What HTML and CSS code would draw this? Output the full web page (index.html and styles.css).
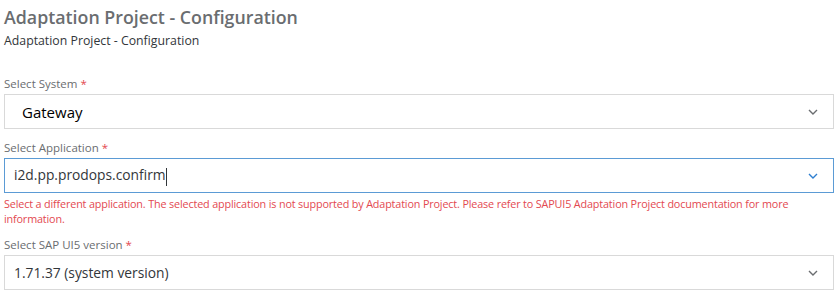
FILE: index.html
```html
<!DOCTYPE html>
<html lang="en">
<head>
  <meta charset="UTF-8" />
  <title>Adaptation Project - Configuration</title>
  <link rel="stylesheet" href="styles.css">
</head>
<body>
  <div class="page">
    <h1 class="title">Adaptation Project - Configuration</h1>
    <div class="subtitle">Adaptation Project - Configuration</div>

    <div class="field first">
      <label class="label">Select System <span class="req">*</span></label>
      <div class="select">
        <span class="value value-big">Gateway</span>
        <svg class="chevron" width="10" height="6" viewBox="0 0 10 6"><path d="M1 1l4 4 4-4" fill="none" stroke="#6a6d70" stroke-width="1.4"/></svg>
      </div>
    </div>

    <div class="field">
      <label class="label">Select Application <span class="req">*</span></label>
      <div class="select focused">
        <span class="value">i2d.pp.prodops.confirm<span class="caret"></span></span>
        <svg class="chevron" width="10" height="6" viewBox="0 0 10 6"><path d="M1 1l4 4 4-4" fill="none" stroke="#2f7fd0" stroke-width="1.4"/></svg>
      </div>
      <div class="error">Select a different application. The selected application is not supported by Adaptation Project. Please refer to SAPUI5 Adaptation Project documentation for more information.</div>
    </div>

    <div class="field">
      <label class="label">Select SAP UI5 version <span class="req">*</span></label>
      <div class="select">
        <span class="value">1.71.37 (system version)</span>
        <svg class="chevron" width="10" height="6" viewBox="0 0 10 6"><path d="M1 1l4 4 4-4" fill="none" stroke="#6a6d70" stroke-width="1.4"/></svg>
      </div>
    </div>
  </div>
</body>
</html>
```

FILE: styles.css
```css
* { box-sizing: border-box; }
body {
  margin: 0;
  background: #fff;
  font-family: "Open Sans", "Noto Sans", sans-serif;
  color: #32363a;
}
.page {
  padding: 4px 5px 0 4px;
}
.title {
  margin: 0;
  font-size: 17.8px;
  font-weight: 600;
  color: #6a6d70;
  line-height: 26px;
}
.subtitle {
  font-size: 12.3px;
  line-height: 18px;
  margin-top: 2px;
  color: #32363a;
}
.field {
  margin-top: 11px;
}
.field.first {
  margin-top: 26px;
}
.label {
  display: block;
  font-size: 11.5px;
  line-height: 16px;
  color: #6a6d70;
  margin-bottom: 2px;
}
.req {
  color: #e34850;
}
.select {
  display: flex;
  align-items: center;
  justify-content: space-between;
  height: 35px;
  border: 1px solid #d9d9d9;
  padding: 0 15px 0 9px;
}
.select.focused {
  border-color: #5b9bd5;
}
.value {
  font-size: 13.8px;
  color: #32363a;
}
.value-big {
  font-size: 15px;
  color: #000;
  padding-left: 8px;
}
.caret {
  display: inline-block;
  width: 1px;
  height: 18px;
  background: #32363a;
  vertical-align: middle;
}
.error {
  font-size: 10.8px;
  letter-spacing: -0.15px;
  line-height: 15px;
  color: #e34850;
  margin-top: 3px;
}
```
